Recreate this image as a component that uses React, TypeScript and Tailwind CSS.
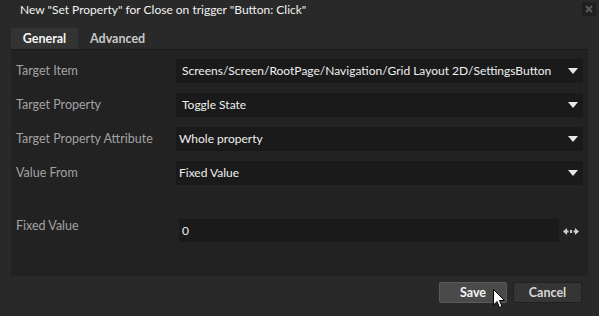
import { useState } from "react";

type TabId = "general" | "advanced";

const rows: Array<{ label: string; value: string; inset: string }> = [
  {
    label: "Target Item",
    value: "Screens/Screen/RootPage/Navigation/Grid Layout 2D/SettingsButton",
    inset: "pl-[6px]",
  },
  { label: "Target Property", value: "Toggle State", inset: "pl-[6px]" },
  { label: "Target Property Attribute", value: "Whole property", inset: "pl-[3px]" },
  { label: "Value From", value: "Fixed Value", inset: "pl-[3px]" },
];

function Caret() {
  return (
    <svg width="10" height="6" viewBox="0 0 10 6" className="shrink-0">
      <path d="M0 0 H10 L5 6 Z" fill="#e8e8e8" />
    </svg>
  );
}

function ArrowsIcon() {
  return (
    <svg width="16" height="9" viewBox="0 0 16 9">
      <path d="M0 4.5 L4 1 V8 Z" fill="#d0d0d0" />
      <rect x="4" y="3.5" width="1.5" height="2" fill="#d0d0d0" />
      <rect x="7" y="3" width="2" height="3" fill="#d0d0d0" />
      <rect x="10.5" y="3.5" width="1.5" height="2" fill="#d0d0d0" />
      <path d="M16 4.5 L12 1 V8 Z" fill="#d0d0d0" />
    </svg>
  );
}

function Cursor() {
  return (
    <svg width="13" height="20" viewBox="0 0 13 20" className="absolute left-[493px] top-[289px]">
      <path
        d="M0.5 0.5 V16 L4 12.5 L6.5 18.5 L9 17.5 L6.5 11.5 H11.5 Z"
        fill="#ffffff"
        stroke="#000000"
        strokeWidth="1"
      />
    </svg>
  );
}

export default function App() {
  const [tab, setTab] = useState<TabId>("general");

  return (
    <div
      className="relative h-[316px] w-[599px] overflow-hidden bg-[#292929] text-[12px] text-[#f0f0f0]"
      style={{ fontFamily: 'Lato, "Noto Sans", sans-serif' }}
    >
      <div className="flex h-[20px] items-start justify-between">
        <p className="pl-[20px] pt-[1px] text-[12px] leading-[17px] text-[#f2f2f2]">
          New "Set Property" for Close on trigger "Button: Click"
        </p>
        <button
          type="button"
          className="mr-[3px] mt-[2px] flex h-[14px] w-[14px] items-center justify-center bg-[#1f1f1f]"
        >
          <svg width="8" height="8" viewBox="0 0 8 8">
            <path d="M1 1 L7 7 M7 1 L1 7" stroke="#5a5a5a" strokeWidth="2" />
          </svg>
        </button>
      </div>

      <div className="mt-[8px] flex pl-[11px]">
        <button
          type="button"
          onClick={() => setTab("general")}
          className={`h-[21px] w-[67px] rounded-t-[2px] text-[12.5px] font-bold leading-[21px] ${
            tab === "general" ? "bg-[#333333] text-[#f4f4f4]" : "text-[#c8c8c8]"
          }`}
        >
          General
        </button>
        <button
          type="button"
          onClick={() => setTab("advanced")}
          className={`ml-[1px] h-[21px] px-[11px] text-[12.5px] font-bold leading-[21px] ${
            tab === "advanced" ? "bg-[#333333] text-[#f4f4f4]" : "text-[#c8c8c8]"
          }`}
        >
          Advanced
        </button>
      </div>

      <div className="ml-[11px] h-[227px] w-[577px] border-t border-[#1a1a1a] bg-[#222222] px-[5px] pt-[9px]">
        <div className="flex flex-col gap-[10px]">
          {rows.map((row) => (
            <div key={row.label} className="flex h-[24px] items-center">
              <span className="w-[160px] shrink-0 text-[12.5px] text-[#a3a3a3]">{row.label}</span>
              <div
                className={`flex h-[24px] flex-1 items-center justify-between bg-[#1a1a1a] pr-[5px] ${row.inset}`}
              >
                <span className="whitespace-nowrap">{row.value}</span>
                <Caret />
              </div>
            </div>
          ))}
        </div>

        <div className="mt-[30px] flex items-start">
          <span className="w-[163px] shrink-0 pt-[2px] text-[12.5px] text-[#a3a3a3]">Fixed Value</span>
          <div className="mt-[4px] flex h-[23px] w-[380px] items-center bg-[#1a1a1a] pl-[3px]">
            0
          </div>
          <div className="ml-[4px] mt-[12px]">
            <ArrowsIcon />
          </div>
        </div>
      </div>

      <div className="mt-[6px] flex justify-end gap-[6px] pr-[17px]">
        <button
          type="button"
          className="h-[21px] w-[68px] rounded-[2px] border border-[#5a5a5a] bg-[#4a4a4a] text-[12.5px] font-bold leading-[19px] text-[#f4f4f4]"
        >
          Save
        </button>
        <button
          type="button"
          className="h-[21px] w-[69px] rounded-[2px] border border-[#202020] bg-[#353535] text-[12.5px] font-bold leading-[19px] text-[#d8d8d8]"
        >
          Cancel
        </button>
      </div>

      <Cursor />
    </div>
  );
}
